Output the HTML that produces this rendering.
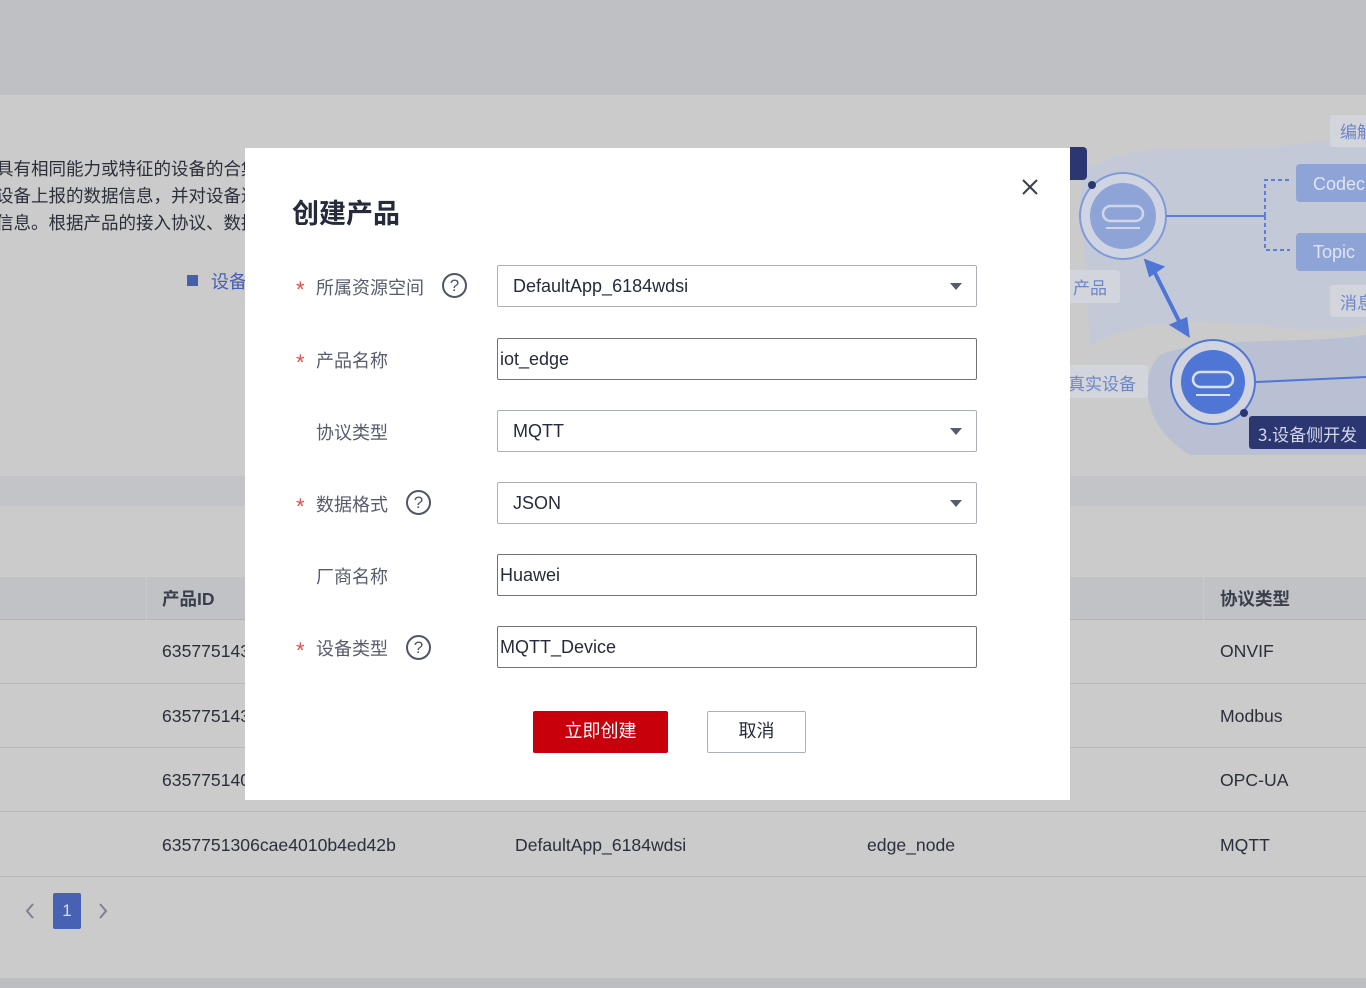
<!DOCTYPE html>
<html><head><meta charset="utf-8">
<style>
*{box-sizing:border-box;margin:0;padding:0}
body{width:1366px;height:988px;overflow:hidden;position:relative;background:#c3c4c8;font-family:"Liberation Sans","Noto Sans CJK SC",sans-serif;color:#252b3a}
.abs{position:absolute}
.top{left:0;top:0;width:1366px;height:95px;background:#bfc0c4}
.intro{left:0;top:95px;width:1366px;height:381px;background:#cbcbcb;overflow:hidden}
.intro p{position:absolute;left:-4px;font-size:17.5px;color:#2b2f3a;white-space:nowrap}
.tbl{left:0;top:506px;width:1366px;height:472px;background:#cbcbcb}
.bot{left:0;top:978px;width:1366px;height:10px;background:#bdbec2}
.hdr{left:0;top:577px;width:1366px;height:43px;background:#c1c2c6;border-bottom:1px solid #b4b4b4}
.row{left:0;width:1366px;height:64px;border-bottom:1px solid #b8b8b8}
.cell{position:absolute;font-size:17.6px;color:#2b2f3a;white-space:nowrap}
.hcell{position:absolute;top:586px;font-size:17.5px;font-weight:bold;color:#3a3f4c}
.modal{left:245px;top:148px;width:825px;height:652px;background:#fff}
.lbl{position:absolute;left:316px;font-size:18px;color:#575d6c;white-space:nowrap}
.star{position:absolute;left:296px;font-size:22px;color:#e84a4a;line-height:1}
.q{position:absolute;width:25px;height:25px;border:2px solid #505665;border-radius:50%;font-size:17px;color:#505665;text-align:center;line-height:21px}
.inp{position:absolute;left:497px;width:480px;height:42px;border:1px solid #adb0b8;border-radius:2px;font-size:18px;line-height:40px;padding-left:15px;color:#252b3a}
.inp.t{border-color:#737373;padding-left:2px}
.arr{position:absolute;right:14px;top:17px;width:0;height:0;border-left:6px solid transparent;border-right:6px solid transparent;border-top:7px solid #575d6c}
</style></head><body>
<div class="abs top"></div>
<div class="abs intro">
<p style="top:61px">具有相同能力或特征的设备的合集</p>
<p style="top:88px">设备上报的数据信息，并对设备进</p>
<p style="top:115px">信息。根据产品的接入协议、数据</p>
<div class="abs" style="left:187px;top:180px;width:11px;height:11px;background:#4360ad"></div>
<div class="abs" style="left:211px;top:173px;font-size:18px;color:#4a5fb0">设备</div>
<svg class="abs" style="left:1070px;top:0" width="296" height="381" viewBox="0 0 296 381">
<path d="M10 80 C60 40,140 60,220 50 L296 40 L296 230 C230 250,120 200,20 250 Z" fill="#c4c9d8"/>
<path d="M90 260 C140 240,230 250,296 240 L296 360 L120 360 C70 330,70 280,90 260Z" fill="#bac0d3"/>
<rect x="-20" y="52" width="37" height="33" rx="4" fill="#2c3670"/>
<circle cx="53" cy="121" r="43" fill="#cfd4e2" stroke="#7f9ad8" stroke-width="2"/>
<circle cx="53" cy="121" r="33" fill="#8fa4d6"/>
<rect x="33" y="111" width="40" height="15" rx="7.5" fill="none" stroke="#cfd6ea" stroke-width="2.5"/>
<line x1="36" y1="133" x2="70" y2="133" stroke="#cfd6ea" stroke-width="2"/>
<circle cx="22" cy="90" r="4" fill="#2c3670"/>
<line x1="96" y1="121" x2="195" y2="121" stroke="#5e7fd5" stroke-width="2"/>
<path d="M195 121 V85 H220 M195 121 V155 H220" fill="none" stroke="#5e7fd5" stroke-width="2" stroke-dasharray="4 3"/>
<rect x="226" y="69" width="80" height="38" rx="4" fill="#8ea3d6"/>
<text x="243" y="95" font-size="18" fill="#dfe5f3" font-family="Liberation Sans">Codec</text>
<rect x="226" y="138" width="80" height="38" rx="4" fill="#8ea3d6"/>
<text x="243" y="163" font-size="18" fill="#dfe5f3" font-family="Liberation Sans">Topic</text>
<rect x="260" y="20" width="50" height="32" rx="3" fill="#d2d5dc"/>
<text x="270" y="43" font-size="17" fill="#6e86c8" font-family="Noto Sans CJK SC">编解</text>
<rect x="260" y="190" width="50" height="32" rx="3" fill="#d2d5dc"/>
<text x="270" y="214" font-size="17" fill="#6e86c8" font-family="Noto Sans CJK SC">消息</text>
<rect x="-5" y="175" width="55" height="33" rx="3" fill="#d2d5dc"/>
<text x="3" y="199" font-size="17" fill="#6e86c8" font-family="Noto Sans CJK SC">产品</text>
<line x1="82" y1="172" x2="112" y2="232" stroke="#4f76d4" stroke-width="4"/>
<path d="M76 166 L92 172 L80 180Z M118 240 L102 230 L116 224Z" fill="#4f76d4" stroke="#4f76d4" stroke-width="3"/>
<circle cx="143" cy="287" r="42" fill="#d0d4e0" stroke="#4f76d4" stroke-width="2"/>
<circle cx="143" cy="287" r="32" fill="#4f76d4"/>
<rect x="123" y="277" width="40" height="15" rx="7.5" fill="none" stroke="#d9e0f3" stroke-width="2.5"/>
<line x1="126" y1="300" x2="160" y2="300" stroke="#d9e0f3" stroke-width="2"/>
<line x1="186" y1="287" x2="296" y2="282" stroke="#4f76d4" stroke-width="2"/>
<rect x="-10" y="270" width="88" height="33" rx="3" fill="#d2d5dc"/>
<text x="-2" y="295" font-size="17" fill="#6e86c8" font-family="Noto Sans CJK SC">真实设备</text>
<circle cx="174" cy="318" r="4" fill="#2c3670"/>
<rect x="179" y="321" width="130" height="33" rx="3" fill="#2c3670"/>
<text x="188" y="346" font-size="17" fill="#d3d8ea" font-family="Noto Sans CJK SC">3.设备侧开发</text>
</svg>
</div>
<div class="abs tbl"></div>
<div class="abs hdr"></div>
<div class="abs" style="left:146px;top:577px;width:1px;height:43px;background:#c9cacd"></div>
<div class="abs" style="left:1203px;top:577px;width:1px;height:43px;background:#c9cacd"></div>
<div class="hcell" style="left:162px">产品ID</div>
<div class="hcell" style="left:1220px">协议类型</div>
<div class="abs row" style="top:620px"></div>
<div class="abs row" style="top:684px"></div>
<div class="abs row" style="top:748px"></div>
<div class="abs row" style="top:813px"></div>
<div class="cell" style="left:162px;top:641px">635775143</div>
<div class="cell" style="left:1220px;top:641px">ONVIF</div>
<div class="cell" style="left:162px;top:706px">635775143</div>
<div class="cell" style="left:1220px;top:706px">Modbus</div>
<div class="cell" style="left:162px;top:770px">635775140</div>
<div class="cell" style="left:1220px;top:770px">OPC-UA</div>
<div class="cell" style="left:162px;top:835px">6357751306cae4010b4ed42b</div>
<div class="cell" style="left:515px;top:835px">DefaultApp_6184wdsi</div>
<div class="cell" style="left:867px;top:835px">edge_node</div>
<div class="cell" style="left:1220px;top:835px">MQTT</div>
<svg class="abs" style="left:24px;top:902px" width="12" height="18"><path d="M9 2L3 9L9 16" fill="none" stroke="#7d8290" stroke-width="2"/></svg>
<div class="abs" style="left:53px;top:893px;width:28px;height:36px;background:#4762b3;border-radius:2px;color:#d8dcea;font-size:17px;text-align:center;line-height:36px">1</div>
<svg class="abs" style="left:97px;top:902px" width="12" height="18"><path d="M3 2L9 9L3 16" fill="none" stroke="#7d8290" stroke-width="2"/></svg>
<div class="abs bot"></div>

<div class="abs modal"></div>
<div class="abs" style="left:292px;top:192px;font-size:27px;font-weight:bold;color:#252b3a">创建产品</div>
<svg class="abs" style="left:1021px;top:178px" width="18" height="18"><path d="M2 2L16 16M16 2L2 16" stroke="#3a3f4c" stroke-width="2"/></svg>

<div class="star" style="top:279px">*</div><div class="lbl" style="top:274px">所属资源空间</div>
<div class="q" style="left:442px;top:273px">?</div>
<div class="inp" style="top:265px">DefaultApp_6184wdsi<div class="arr"></div></div>

<div class="star" style="top:352px">*</div><div class="lbl" style="top:347px">产品名称</div>
<div class="inp t" style="top:338px">iot_edge</div>

<div class="lbl" style="top:419px">协议类型</div>
<div class="inp" style="top:410px">MQTT<div class="arr"></div></div>

<div class="star" style="top:496px">*</div><div class="lbl" style="top:491px">数据格式</div>
<div class="q" style="left:406px;top:490px">?</div>
<div class="inp" style="top:482px">JSON<div class="arr"></div></div>

<div class="lbl" style="top:563px">厂商名称</div>
<div class="inp t" style="top:554px">Huawei</div>

<div class="star" style="top:640px">*</div><div class="lbl" style="top:635px">设备类型</div>
<div class="q" style="left:406px;top:635px">?</div>
<div class="inp t" style="top:626px">MQTT_Device</div>

<div class="abs" style="left:533px;top:711px;width:135px;height:42px;background:#c7000b;border-radius:2px;color:#fff;font-size:18px;text-align:center;line-height:40px">立即创建</div>
<div class="abs" style="left:707px;top:711px;width:99px;height:42px;border:1px solid #adb0b8;border-radius:2px;color:#252b3a;font-size:18px;text-align:center;line-height:38px">取消</div>
</body></html>
